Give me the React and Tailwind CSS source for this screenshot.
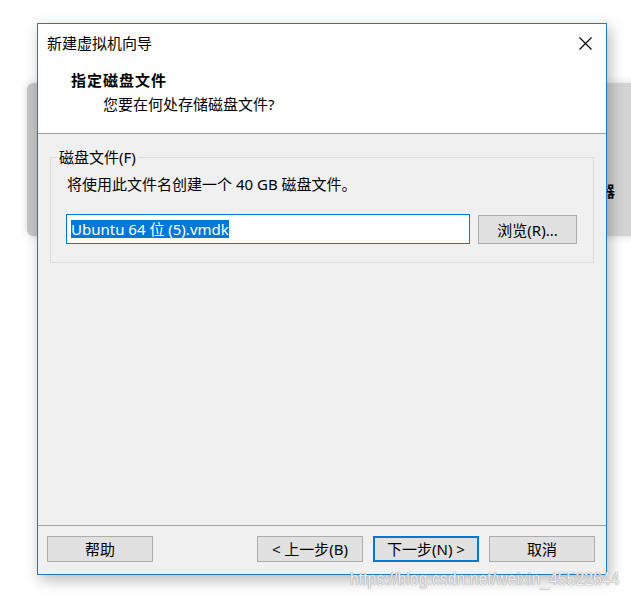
import React from 'react'

const font = "font-['Noto_Sans','Noto_Sans_CJK_SC',sans-serif]"

const Button = ({ children, primary }) => (
  <button
    className={
      'h-[26px] w-[106px] bg-[#e1e1e1] text-[15px] leading-[20px] text-black flex items-center justify-center ' +
      (primary ? 'border-2 border-[#0078d7]' : 'border border-[#adadad]')
    }
  >
    {children}
  </button>
)

const App = () => {
  return (
    <div className={`relative w-[631px] h-[598px] bg-white overflow-hidden ${font}`}>
      {/* window behind */}
      <div className="absolute left-[27px] top-[83px] w-[620px] h-[153px] rounded-l-[6px] bg-gradient-to-r from-[#c6c6c6] to-[#d4d4d4] shadow-[0_0_8px_rgba(0,0,0,0.15)]">
        <span className="absolute left-[573px] top-[98px] text-[15px] leading-[20px] font-bold text-black">器</span>
      </div>

      {/* dialog */}
      <div className="relative ml-[37px] mt-[23px] w-[570px] h-[552px] border border-[#1a7ad0] bg-[#f0f0f0] flex flex-col shadow-[3px_5px_14px_rgba(0,0,0,0.28)]">
        {/* Header */}
        <div className="h-[109px] bg-white flex flex-col">
          <div className="h-[38px] flex items-center justify-between pl-[9px] pr-[14px]">
            <span className="text-[15px] leading-[20px] text-black">新建虚拟机向导</span>
            <svg width="13" height="13" viewBox="0 0 13 13">
              <path d="M0.5 0.5 L12.5 12.5 M12.5 0.5 L0.5 12.5" stroke="#000" strokeWidth="1.1" />
            </svg>
          </div>
          <div className="mt-[8px] pl-[33px] text-[15px] leading-[20px] font-bold text-black tracking-[1px]">指定磁盘文件</div>
          <div className="mt-[4px] pl-[65px] text-[15px] leading-[20px] text-black">您要在何处存储磁盘文件?</div>
        </div>
        <div className="h-px bg-[#a0a0a0]" />

        {/* Body */}
        <div className="h-[391px] pt-[23px] pl-[12px]">
          <div className="relative w-[544px] h-[106px] border border-[#dcdcdc]">
            <span className="absolute left-[6px] top-[-11px] px-[2px] bg-[#f0f0f0] text-[15px] leading-[20px] text-black">磁盘文件(F)</span>
            <div className="pt-[16px] pl-[16px] text-[15px] leading-[20px] text-black">将使用此文件名创建一个 40 GB 磁盘文件。</div>
            <div className="mt-[20px] pl-[15px] flex items-start gap-[8px]">
              <div className="w-[404px] h-[30px] bg-white border border-[#0078d7] pl-[4px] flex items-center">
                <span className="bg-[#0078d7] text-white text-[15px] leading-[18px]">Ubuntu 64 位 (5).vmdk</span>
              </div>
              <div className="mt-[1px]">
                <button className="h-[29px] w-[99px] bg-[#e1e1e1] border border-[#adadad] text-[15px] leading-[20px] text-black">浏览(R)...</button>
              </div>
            </div>
          </div>
        </div>
        <div className="h-px bg-[#a0a0a0]" />

        {/* Footer */}
        <div className="flex-1 pt-[10px] pl-[9px] pr-[11px] flex items-start">
          <Button>帮助</Button>
          <div className="flex-1" />
          <div className="flex gap-[10px]">
            <Button>&lt; 上一步(B)</Button>
            <Button primary>下一步(N) &gt;</Button>
            <Button>取消</Button>
          </div>
        </div>
      </div>

      {/* watermark */}
      <div className="absolute left-[350px] top-[568px] origin-left scale-x-[0.88] whitespace-nowrap font-['Liberation_Sans',sans-serif] text-[18px] leading-[22px] text-[#ededed] [text-shadow:0_0_1px_#9a9a9a,0_0_1px_#9a9a9a]">
        https://blog.csdn.net/weixin_45522644
      </div>
    </div>
  )
}

export default App
